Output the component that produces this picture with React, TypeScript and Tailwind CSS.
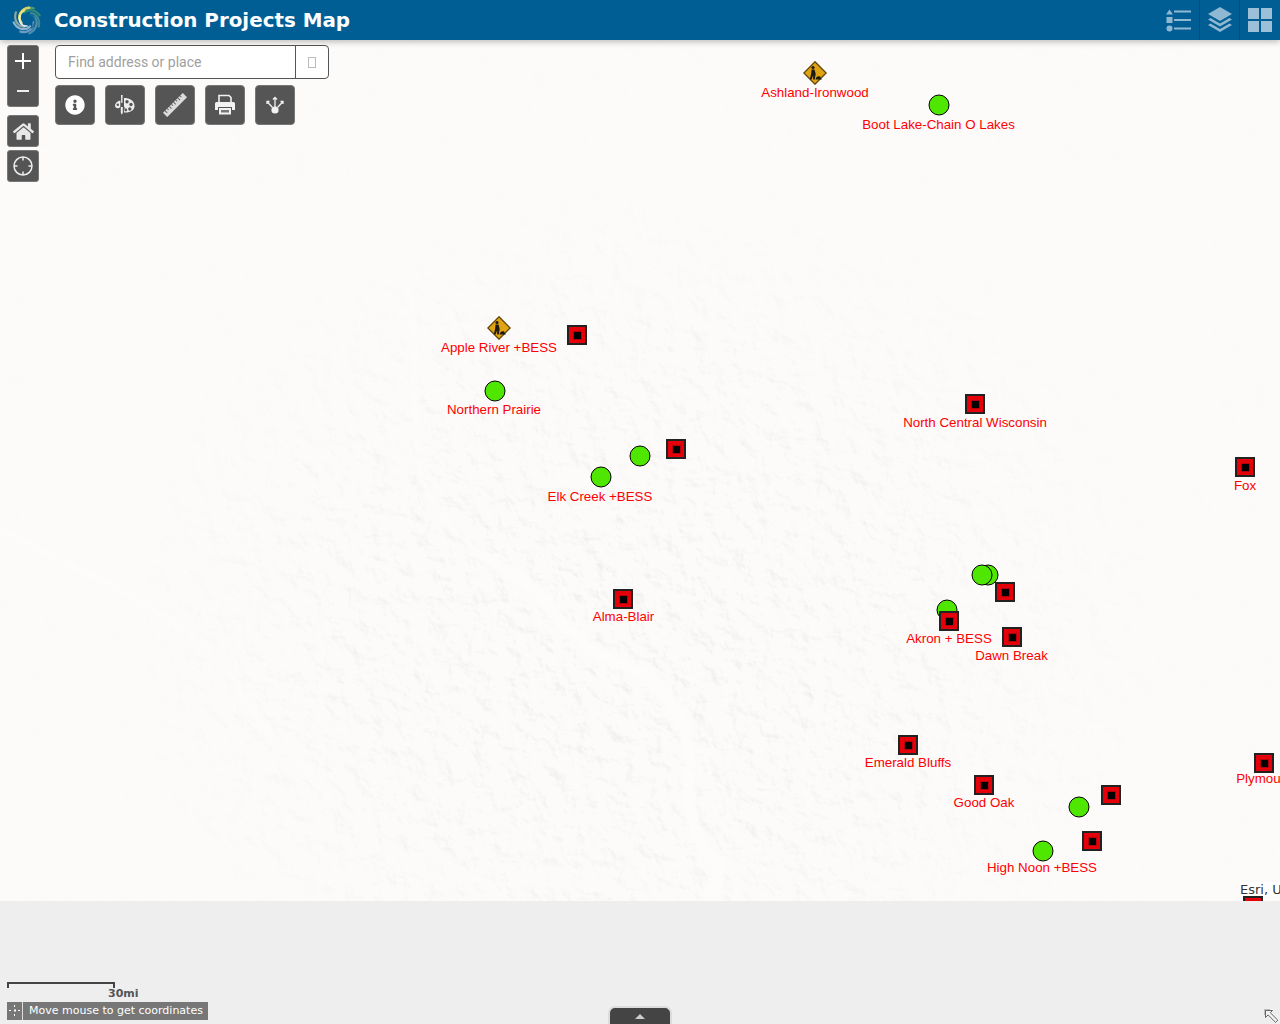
import { FaHome, FaInfoCircle } from "react-icons/fa";

const squares = [
  [577, 335], [975, 404], [676, 449], [1245, 467], [623, 599], [1005, 592],
  [1012, 637], [908, 745], [984, 785], [1111, 795], [1092, 841], [1264, 763], [1253, 906],
];
const circles = [
  [938.5, 105], [494.5, 391], [640, 456], [600.5, 477], [987.5, 575], [981.5, 575], [946.5, 610], [1078.5, 807], [1042.5, 851],
];
const diamonds = [
  [815, 73], [499, 328],
];
const labels: [string, number, number][] = [
  ["Ashland-Ironwood", 815, 92.5],
  ["Boot Lake-Chain O Lakes", 938.5, 124.5],
  ["Apple River +BESS", 499, 347.5],
  ["Northern Prairie", 494, 409.5],
  ["North Central Wisconsin", 975, 422.5],
  ["Fox", 1245, 485.5],
  ["Elk Creek +BESS", 600, 496.5],
  ["Alma-Blair", 623.5, 616.5],
  ["Akron + BESS", 949, 638.5],
  ["Dawn Break", 1011.5, 655.5],
  ["Emerald Bluffs", 908, 762.5],
  ["Good Oak", 984, 802.5],
  ["Plymouth", 1264, 778.5],
  ["High Noon +BESS", 1042, 867.5],
];

// swirl blade for the logo, angles in degrees
function blade(a0: number, a1: number, r0: number, r1: number) {
  const pts: string[] = [];
  for (let i = 0; i <= 12; i++) {
    const t = i / 12;
    const a = ((a0 + (a1 - a0) * t) * Math.PI) / 180;
    const r = r0 + (r1 - r0) * t;
    pts.push(`${(15 + r * Math.cos(a)).toFixed(2)} ${(15 + r * Math.sin(a)).toFixed(2)}`);
  }
  return `M${pts.join("L")}`;
}

const logoBlades: [number, number, number, number, string, number][] = [
  [200, 300, 8, 13.5, "#4f9a72", 2.2],
  [250, 340, 8, 13.5, "#2f8a76", 2.2],
  [300, 390, 8, 13.5, "#3c8794", 2.2],
  [340, 440, 8, 13.5, "#4f8fb0", 2.2],
  [20, 120, 7, 13.5, "#6d9cc0", 2.2],
  [65, 170, 7, 13.5, "#8db4d2", 2.2],
  [110, 215, 7, 13.5, "#8fa9a0", 2.2],
  [170, 280, 6.5, 12.5, "#d9d060", 2.4],
  [150, 255, 6, 10, "#efe27a", 2],
  [90, 210, 6, 8, "#e8f0f4", 1.6],
  [-60, 60, 6.5, 9, "#1b6a94", 1.6],
];

function Logo() {
  return (
    <svg width="30" height="30" viewBox="0 0 30 30" fill="none" strokeLinecap="round">
      {logoBlades.map(([a0, a1, r0, r1, color, w]) => (
        <path key={`${a0}-${a1}`} d={blade(a0, a1, r0, r1)} stroke={color} strokeWidth={w} />
      ))}
    </svg>
  );
}

function HeaderIcons() {
  return (
    <div className="flex h-10 pr-[1px]">
      <div className="flex w-10 items-center justify-center">
        <svg width="26" height="24" viewBox="0 0 26 24" fill="#8fb8d2">
          <path d="M3.500 1.500 7 6.500H0Z" />
          <rect x="0.500" y="9" width="6" height="6" />
          <circle cx="3.500" cy="20.500" r="3" />
          <rect x="8" y="2.500" width="17" height="2" />
          <rect x="8" y="11" width="17" height="2" />
          <rect x="8" y="19.500" width="17" height="2" />
        </svg>
      </div>
      <div className="flex w-10 items-center justify-center border-l border-[#0b4a73]">
        <svg width="24" height="26" viewBox="0 0 24 26" fill="#8fb8d2">
          <path d="M12 0 24 7 12 14 0 7Z" />
          <path d="M2.500 11 12 16.500 21.500 11 24 12.500 12 19.500 0 12.500Z" />
          <path d="M2.500 16.500 12 22 21.500 16.500 24 18 12 25 0 18Z" />
        </svg>
      </div>
      <div className="flex w-10 items-center justify-center border-l border-[#0b4a73]">
        <div className="grid grid-cols-2 gap-[2px]">
          <div className="size-[11px] bg-[#9cc0d8]" />
          <div className="size-[11px] bg-[#9cc0d8]" />
          <div className="size-[11px] bg-[#9cc0d8]" />
          <div className="size-[11px] bg-[#9cc0d8]" />
        </div>
      </div>
    </div>
  );
}

function PaletteIcon() {
  return (
    <svg width="22" height="22" viewBox="0 0 22 22">
      <path d="M7 1h1.600l-.2 8H7.200Z" fill="#eee" />
      <path d="M6.800 13h2v5c0 1-.4 2-1 2.500-.6-.5-1-1.500-1-2.500Z" fill="#eee" />
      <path d="M10 4c5.500 0 10.500 2.500 10.500 8 0 4.500-4.500 7-10.500 6.500v-3c1-1 1-2 0-3Z" fill="#eee" />
      <path d="M6.300 6.500C3 7.300 1 9.300 1 11.500c0 2 1.800 3 3 2.700 1.300-.3 2-.8 2.300-1.500Z" fill="#eee" />
      <circle cx="13" cy="7.800" r="1.700" fill="#555" />
      <circle cx="17" cy="10.500" r="1.700" fill="#555" />
      <circle cx="15.800" cy="15" r="1.700" fill="#555" />
      <circle cx="11.800" cy="16" r="1.400" fill="#555" />
      <circle cx="3.800" cy="10.800" r="1.200" fill="#555" />
    </svg>
  );
}

function RulerIcon() {
  return (
    <svg width="24" height="24" viewBox="0 0 24 24">
      <g transform="rotate(-45 12 12)">
        <rect x="-2" y="9" width="28" height="6" fill="#dcdcdc" />
        <path d="M1 9v3M4 9v2M7 9v3M10 9v2M13 9v3M16 9v2M19 9v3M22 9v2" stroke="#666" strokeWidth="1" />
      </g>
    </svg>
  );
}

function PrintIcon() {
  return (
    <svg width="22" height="22" viewBox="0 0 22 22">
      <path d="M5 8V1.500h10l2 2V8" fill="none" stroke="#f2f2f2" strokeWidth="1.600" />
      <path d="M2.500 8h17A1.500 1.500 0 0 1 21 9.500V16h-3v-3H4v3H1V9.500A1.500 1.500 0 0 1 2.500 8Z" fill="#f2f2f2" />
      <path d="M5 14h12v6.500H5Z" fill="#f2f2f2" />
      <rect x="7" y="16" width="8" height="2.500" fill="#777" />
    </svg>
  );
}

function ShareIcon() {
  return (
    <svg width="22" height="22" viewBox="0 0 22 22" fill="none" stroke="#f2f2f2" strokeWidth="1.300">
      <circle cx="11" cy="16" r="3.600" fill="#f2f2f2" stroke="none" />
      <path d="M11 13V3.500M9 5.500l2-2 2 2" />
      <path d="M8.500 13.500 3 7.500M3 10V7.500H5.500" />
      <path d="M13.500 13.500 19 7.500M16.500 7.500H19V10" />
    </svg>
  );
}

function LocateIcon() {
  return (
    <svg width="20" height="20" viewBox="0 0 20 20" fill="none" stroke="#eee" strokeWidth="1.500">
      <circle cx="10" cy="10" r="9" />
      <path d="M10 1v3.500M10 15.500V19M1 10h3.500M15.500 10H19" />
    </svg>
  );
}

function ToolButton({ children }: { children: React.ReactNode }) {
  return (
    <button type="button" className="flex size-10 items-center justify-center rounded-[4px] border border-[#777] bg-[#555]">
      {children}
    </button>
  );
}

function MapControls() {
  return (
    <div className="absolute left-[7px] top-[5px] flex gap-4">
      <div className="flex w-8 flex-col">
        <div className="flex h-[62px] flex-col rounded-[3px] border border-[#777] bg-[#555]">
          <button type="button" className="flex h-[29px] items-center justify-center">
            <svg width="16" height="16" viewBox="0 0 16 16" fill="#fff"><rect x="7" y="0" width="2" height="16" /><rect x="0" y="7" width="16" height="2" /></svg>
          </button>
          <button type="button" className="flex h-[31px] items-center justify-center">
            <svg width="12" height="2" viewBox="0 0 12 2" fill="#eee"><rect width="12" height="2" /></svg>
          </button>
        </div>
        <button type="button" className="mt-2 flex h-8 items-center justify-center rounded-[3px] border border-[#777] bg-[#555] text-[#e8e8e8]">
          <FaHome size={21} />
        </button>
        <button type="button" className="mt-[3px] flex h-8 items-center justify-center rounded-[3px] border border-[#777] bg-[#555]">
          <LocateIcon />
        </button>
      </div>
      <div className="flex flex-col gap-[6px]">
        <div className="flex h-[34px] w-[274px] rounded-[4px] border border-[#555] bg-white">
          <div className="flex w-[240px] items-center border-r border-[#555] pl-3 font-['Roboto',sans-serif] text-sm text-[#a0a0a0]">Find address or place</div>
          <div className="flex flex-1 items-center justify-center">
            <div className="h-[11px] w-2 border border-[#bbb]" />
          </div>
        </div>
        <div className="flex gap-[10px]">
          <ToolButton><FaInfoCircle size={20} color="#fff" /></ToolButton>
          <ToolButton><PaletteIcon /></ToolButton>
          <ToolButton><RulerIcon /></ToolButton>
          <ToolButton><PrintIcon /></ToolButton>
          <ToolButton><ShareIcon /></ToolButton>
        </div>
      </div>
    </div>
  );
}

function Terrain() {
  return (
    <svg className="absolute inset-0 h-full w-full" viewBox="0 40 1280 861" fill="none">
      <defs>
        <filter id="hill" x="0" y="0" width="100%" height="100%" colorInterpolationFilters="sRGB">
          <feTurbulence type="fractalNoise" baseFrequency="0.05" numOctaves="5" seed="11" result="n" />
          <feDiffuseLighting in="n" surfaceScale="4" lightingColor="#fff" diffuseConstant="1">
            <feDistantLight azimuth="315" elevation="55" />
          </feDiffuseLighting>
          <feColorMatrix values="0 0 0 0 0.72  0 0 0 0 0.71  0 0 0 0 0.69  -1.400 0 0 0 1.100" />
        </filter>
        <radialGradient id="fade" gradientUnits="userSpaceOnUse" cx="640" cy="640" r="520" gradientTransform="translate(640 640) scale(1 0.85) translate(-640 -640)">
          <stop offset="0" stopColor="#fff" stopOpacity="1" />
          <stop offset="0.55" stopColor="#fff" stopOpacity="0.7" />
          <stop offset="1" stopColor="#fff" stopOpacity="0.08" />
        </radialGradient>
        <mask id="fadeMask">
          <rect x="0" y="40" width="1280" height="861" fill="url(#fade)" />
        </mask>
        <filter id="soft"><feGaussianBlur stdDeviation="2" /></filter>
      </defs>
      <g mask="url(#fadeMask)">
        <rect x="0" y="40" width="1280" height="861" filter="url(#hill)" opacity="0.3" />
      </g>
      <g stroke="#fdfcfb" strokeLinecap="round" filter="url(#soft)">
        <path d="M490 560C510 575 535 580 555 615 575 640 600 655 640 672 680 695 690 730 690 790 690 830 700 850 718 862 722 880 712 890 706 901" strokeWidth="12" />
        <path d="M410 290C420 340 410 400 420 470 430 510 460 540 490 560" strokeWidth="5" />
        <path d="M0 530C100 580 200 620 240 690 260 730 300 760 330 800" strokeWidth="5" />
      </g>
    </svg>
  );
}

function Markers() {
  return (
    <>
      {circles.map(([x, y]) => (
        <div
          key={`${x}-${y}`}
          className="absolute size-[21px] -translate-x-1/2 -translate-y-1/2 rounded-full border border-black bg-[#4fe600]"
          style={{ left: x, top: y - 40 }}
        />
      ))}
      {diamonds.map(([x, y]) => (
        <svg key={x} className="absolute -translate-x-1/2 -translate-y-1/2" style={{ left: x, top: y - 40 }} width="24" height="24" viewBox="0 0 24 24">
          <path d="M12 .8 23.200 12 12 23.200.8 12Z" fill="#e0a312" stroke="#5f4409" strokeWidth="1.300" />
          <circle cx="10" cy="6.500" r="1.600" fill="#1d1a12" />
          <path d="M8.500 8.500h3l1.200 4.500-1 5.500H10l.2-4.200-1.700 4.200H6.800l1.400-6Z" fill="#1d1a12" />
          <path d="M12.500 18.500c.3-2.500 2.500-3.800 4.500-3l1.800 3Z" fill="#1d1a12" />
        </svg>
      ))}
      {squares.map(([x, y]) => (
        <Square key={`${x}-${y}`} x={x} y={y} />
      ))}
      <Square x={949} y={621} />
      {labels.map(([text, x, y]) => (
        <div
          key={text}
          className="absolute -translate-x-1/2 -translate-y-1/2 whitespace-nowrap font-['Liberation_Sans',sans-serif] text-[13.33px] leading-none text-[#ff0000]"
          style={{ left: x, top: y - 40 }}
        >
          {text}
        </div>
      ))}
    </>
  );
}

function Square({ x, y }: { x: number; y: number }) {
  return (
    <div
      className="absolute flex size-5 -translate-x-1/2 -translate-y-1/2 items-center justify-center border-2 border-[#222] bg-[#e60009]"
      style={{ left: x, top: y - 40 }}
    >
      <div className="size-[7px] bg-black shadow-[0_0_0_1px_#b3000a]" />
    </div>
  );
}

export default function App() {
  return (
    <div className="flex h-[1024px] w-[1280px] flex-col overflow-hidden bg-[#eeeeee] font-['DejaVu_Sans',sans-serif]">
      <header className="relative z-10 flex h-10 shrink-0 items-center justify-between bg-[#005e95] shadow-[0_2px_6px_rgba(0,0,0,0.25)]">
        <div className="flex items-center">
          <div className="ml-3 flex w-[42px]"><Logo /></div>
          <h1 className="pt-[2px] text-[19.87px] font-bold leading-none text-white">Construction Projects Map</h1>
        </div>
        <HeaderIcons />
      </header>

      <main className="relative h-[861px] shrink-0 overflow-hidden bg-[#fcfbfa]">
        <Terrain />
        <Markers />
        <div className="absolute right-0 top-[842px] h-[14px] w-10 overflow-hidden whitespace-nowrap bg-white pt-[1px] text-[13px] leading-none text-[#333]">Esri, USGS</div>
        <MapControls />
      </main>

      <footer className="relative flex flex-1 items-end justify-between pl-[7px]">
        <div className="mb-[4px] flex flex-col">
          <div className="h-[6px] w-[108px] border-x-2 border-t-2 border-[#444]" />
          <div className="ml-[101px] -mt-[1px] text-[11px] font-bold leading-[14px] text-[#555]">30mi</div>
          <div className="mt-[1px] flex h-[18px] w-[201px] items-center bg-[#777] text-[11px] text-white">
            <div className="flex h-full w-4 items-center justify-center border-r border-[#ddd]">
              <svg width="12" height="12" viewBox="0 0 12 12" fill="#fff"><rect x="5" y="4.500" width="2" height="2" /><rect x="5" y="0" width="1" height="2" /><rect x="5" y="9" width="1" height="2" /><rect x="0" y="5" width="2" height="1" /><rect x="9" y="5" width="2" height="1" /></svg>
            </div>
            <span className="pl-[6px]">Move mouse to get coordinates</span>
          </div>
        </div>
        <div className="absolute bottom-0 left-[608px] flex h-[18px] w-[64px] justify-center rounded-t-[7px] border-2 border-b-0 border-[#dcdcdc] bg-[#444] pt-[6px]">
          <div className="h-0 w-0 border-x-[5px] border-b-[5px] border-x-transparent border-b-[#ccc]" />
        </div>
        <div className="mb-[1px] mr-[1px]">
          <svg width="15" height="14" viewBox="0 0 15 14" fill="none" stroke="#666">
            <rect x="0" y="0" width="6" height="6" fill="#bbb" stroke="none" />
            <path d="M1.500 1.500h7l-2.200 2.200 7.500 7.500-2.200 2.200-7.500-7.500-2.600 2.600Z" fill="#f2f2f2" />
          </svg>
        </div>
      </footer>
    </div>
  );
}
